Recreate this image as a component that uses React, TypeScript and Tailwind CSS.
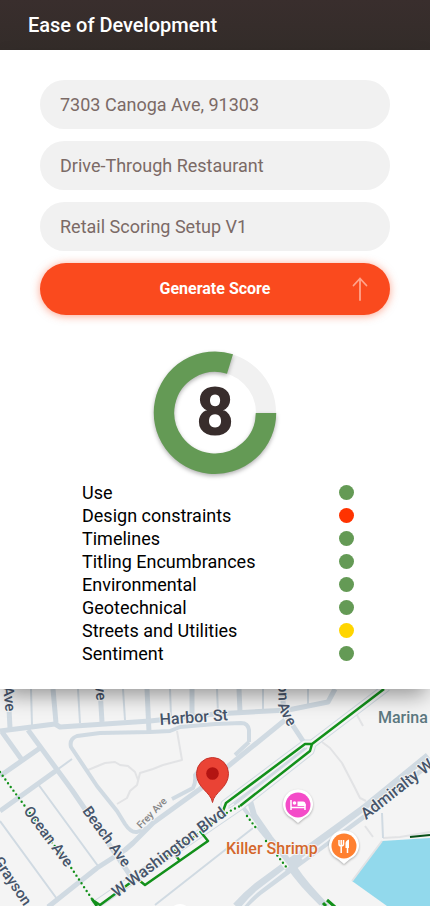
import { useState } from "react";

const GREEN = "bg-[#649a55]";

const factors = [
  { name: "Use", status: "Good", color: GREEN },
  { name: "Design constraints", status: "Poor", color: "bg-[#ff3300]" },
  { name: "Timelines", status: "Good", color: GREEN },
  { name: "Titling Encumbrances", status: "Good", color: GREEN },
  { name: "Environmental", status: "Good", color: GREEN },
  { name: "Geotechnical", status: "Good", color: GREEN },
  { name: "Streets and Utilities", status: "Fair", color: "bg-[#ffd500]" },
  { name: "Sentiment", status: "Good", color: GREEN },
];

function Field({ label, initial }: { label: string; initial: string }) {
  const [value, setValue] = useState(initial);
  return (
    <input
      aria-label={label}
      value={value}
      onChange={(e) => setValue(e.target.value)}
      className="h-[49px] w-full rounded-full bg-[#f1f1f1] px-5 pb-px text-lg text-[#7b6a66] outline-none"
    />
  );
}

function ScoreRing({ score }: { score: number }) {
  return (
    <div className="grid size-[124px] place-items-center">
      <svg viewBox="0 0 124 124" className="col-start-1 row-start-1 size-full overflow-visible" aria-hidden="true">
        <circle cx="62" cy="62" r="51" fill="none" stroke="#f1f1f1" strokeWidth="20" />
        <path
          d="M113 62A51 51 0 1 1 77 13"
          fill="none"
          stroke="#649a55"
          strokeWidth="20.5"
          className="drop-shadow-[0_2px_2px_rgba(0,0,0,0.3)]"
        />
      </svg>
      <span className="col-start-1 row-start-1 text-[66px] leading-none font-extrabold text-[#382d2c]">{score}</span>
    </div>
  );
}

// Neighbourhood map around the selected parcel.
function AreaMap() {
  return (
    <svg
      viewBox="0 689 430 217"
      preserveAspectRatio="xMidYMid slice"
      className="block h-[217px] w-full bg-[#f4f4f4]"
      role="img"
      aria-label="Map of the area around W Washington Blvd"
    >
      <path d="M382 841L430 838V906H387L352 881Z" fill="#92d9ec" />

      <g fill="none" stroke="#e2e3e5" strokeWidth="2" strokeLinejoin="round">
        <path d="M177 731L182 760L163 765L153 769L140 773L137 785L130 791L127 798L117 804" />
        <path d="M88 770L105 763L115 762L120 765L128 766L135 772L138 780" />
        <path d="M322 742L330 748L342 763L355 788L360 798L366 801" />
        <path d="M357 715L363 726M365 826L373 837" />
        <path d="M382 841L352 881M383 838L400 837L430 832" />
      </g>

      <g fill="none" stroke="#d0dae2" strokeLinejoin="round">
        <g strokeWidth="2">
          <path d="M31 689L32 725M78 689L80 723M123 689L125 720M170 689L171 716M217 689L218 713M263 689V710M308 689V705" />
          <path d="M38 784L98 866M0 821L57 899M155 905L253 828M382 813L383 838" />
        </g>
        <g strokeWidth="5">
          <path d="M8 689L10 728M53 689L56 723M100 689L102 722M147 689L149 732M192 689V715M239 689L240 712" />
          <path d="M0 731L55 724L60 727L150 721L215 714L288 710L328 702L335 689" />
          <path d="M2 732L22 760M28 730L72 790L132 878M40 748L0 776M57 770L0 811" />
          <path d="M282 689L284 712L305 744" />
          <path d="M48 907L97 868L125 850L133 843L153 823L200 789L285 720" />
        </g>
        <g strokeWidth="4">
          <path d="M249 742V730Q248 723 241 723L215 724L180 727L170 731L150 732L100 733L77 736Q69 739 71 747L97 786L117 811L125 824Q131 833 137 832L147 828" />
          <path d="M249 742L235 755M172 799L193 788Q196 783 195 775L203 766" />
        </g>
        <path d="M72 759L50 775" strokeWidth="2" />
        <path d="M242 806L262 832L290 866" strokeWidth="4" />
        <path d="M250 801L254 815L270 838L294 868Q305 885 327 907" strokeWidth="6" />
        <path d="M288 866Q300 884 321 904" strokeWidth="4" />
        <path d="M238 908Q248 897 258 889L292 864L365 811L430 758" strokeWidth="13" />
        <path d="M240 910Q249 898 259 890L285 870M302 859L365 812L430 759" stroke="#f1f3f5" strokeWidth="2" />
        <path d="M387 687L312 744L310 751L240 806L94 906M312 744L305 744L225 804V811" strokeWidth="9" />
        <path d="M387 687L312 744L310 751L240 806L94 906M312 744L305 744L225 804V811" stroke="#f4f4f4" strokeWidth="7" />
        <path d="M305 748L234 804" strokeWidth="2" />
      </g>

      <g fill="none" stroke="#12901a" strokeWidth="2" strokeLinejoin="round">
        <path d="M384 689L312 744L305 744L226 803L223 811M312 744L310 751L240 806" strokeWidth="2.5" />
        <path d="M94 901L100 905L130 883M140 881L145 885L208 841L200 831M180 861L176 856" strokeWidth="2.5" />
        <path d="M92 899L97 906M323 903L326 906M327 900L335 907" strokeWidth="3" />
        <path d="M410 837L430 835" stroke="#075017" />
        <path d="M247 816L256 828M266 841L287 868M228 812L240 806" stroke="#f4f4f4" strokeWidth="5" />
        <path
          d="M0 772L10 786L30 813L72 869L92 899M130 883L228 812L240 806M247 816L256 828M266 841L287 868"
          strokeWidth="2.4"
          strokeLinecap="round"
          strokeDasharray="0 4.6"
        />
      </g>

      <g
        fill="#46546a"
        stroke="#f4f4f4"
        strokeWidth="2"
        strokeLinejoin="round"
        paintOrder="stroke"
        className="text-[15px] font-medium"
      >
        <text transform="translate(160 725) rotate(-4)" className="text-[16px]">Harbor St</text>
        <text transform="translate(3 687) rotate(84)">Ave</text>
        <text transform="translate(94 676) rotate(84)">Ave</text>
        <path id="avenue" d="M278 684L279 708Q281 716 303 751" fill="none" stroke="none" />
        <text><textPath href="#avenue">on Ave</textPath></text>
        <text transform="translate(23 811) rotate(53)">Ocean Ave</text>
        <text transform="translate(82 811) rotate(54)">Beach Ave</text>
        <text transform="translate(-7 861) rotate(56)">Grayson</text>
        <text transform="translate(117 898) rotate(-37)" className="text-[16px]">W Washington Blvd</text>
        <text transform="translate(366 820) rotate(-38)" className="text-[16px]">Admiralty Way</text>
        <text transform="translate(141 829) rotate(-46)" fill="#858585" className="text-[10px]">Frey Ave</text>
        <text x="378" y="723" fill="#5c7880" className="text-[16px]">Marina</text>
        <text x="226" y="854" fill="#d4672b" className="text-[16px]">Killer Shrimp</text>
      </g>

      <circle cx="180" cy="915" r="11" fill="#fff" />

      <g className="drop-shadow-[0_1px_1px_rgba(0,0,0,0.3)]">
        <path d="M298 823L292 818A15 15 0 1 1 304 818Z" fill="#fff" />
        <path d="M344 864L338 859A15 15 0 1 1 350 859Z" fill="#fff" />
      </g>
      <circle cx="298" cy="805" r="12.5" fill="#f44bc8" />
      <path d="M291 800V810M291 807.5H305V810M305 807V804" fill="none" stroke="#fff" strokeWidth="1.5" />
      <circle cx="294.5" cy="803" r="1.8" fill="#fff" />
      <path d="M297.5 801.5H303Q305.5 801.5 305.5 804V806H297.5Z" fill="#fff" />
      <circle cx="344" cy="846" r="12.5" fill="#ff8030" />
      <path d="M339 840V844Q339 846 341 846Q343.5 846 343.5 844V840M341.2 840V853M347.5 846V853" fill="none" stroke="#fff" strokeWidth="1.5" />
      <path d="M345.5 848V843Q346 840 349 839.5V848Z" fill="#fff" />

      <path
        d="M212.5 802.5C211 792 196.5 788 196.5 773.5A16 16 0 0 1 228.5 773.5C228.5 788 214 792 212.5 802.5Z"
        fill="#ea4335"
        stroke="#c5332b"
        strokeWidth="1"
      />
      <circle cx="212.5" cy="773.5" r="6.3" fill="#b31412" />
    </svg>
  );
}

export default function App() {
  return (
    <div className="flex min-h-screen flex-col bg-white font-[Roboto,sans-serif]">
      <header className="flex h-[50px] items-center bg-linear-to-b from-[#392e2d] to-[#332c29] px-7">
        <h1 className="text-xl font-medium text-white">Ease of Development</h1>
      </header>

      <main className="flex flex-col">
        <section className="relative z-10 flex flex-col items-center bg-white px-10 pt-[30px] pb-6 shadow-[0_10px_20px_-4px_rgba(0,0,0,0.4)]">
          <form className="flex w-full flex-col gap-3" onSubmit={(e) => e.preventDefault()}>
            <Field label="Address" initial="7303 Canoga Ave, 91303" />
            <Field label="Intended use" initial="Drive-Through Restaurant" />
            <Field label="Scoring setup" initial="Retail Scoring Setup V1" />
            <button
              type="submit"
              className="grid h-[52px] w-full grid-cols-[1fr_auto_1fr] items-center rounded-full bg-[#fa4a1e] px-5 text-base font-bold text-white shadow-[0_1px_8px_rgba(250,74,30,0.5)]"
            >
              <span className="col-start-2">Generate Score</span>
              <svg viewBox="0 0 20 24" className="h-6 w-5 justify-self-end" fill="none" stroke="#ffa48c" strokeWidth="1.8" strokeLinecap="round" aria-hidden="true">
                <path d="M10 23V1.5M3.5 8.5L10 1.5L16.5 8.5" />
              </svg>
            </button>
          </form>

          <div className="pt-9">
            <ScoreRing score={8} />
          </div>

          <ul className="w-full pt-1.5 pr-9 pl-[42px] text-lg text-black">
            {factors.map((f) => (
              <li key={f.name} className="flex h-[23px] items-center justify-between">
                <span>{f.name}</span>
                <span role="img" aria-label={f.status} className={`size-[15px] rounded-full ${f.color}`} />
              </li>
            ))}
          </ul>
        </section>

        <AreaMap />
      </main>
    </div>
  );
}
